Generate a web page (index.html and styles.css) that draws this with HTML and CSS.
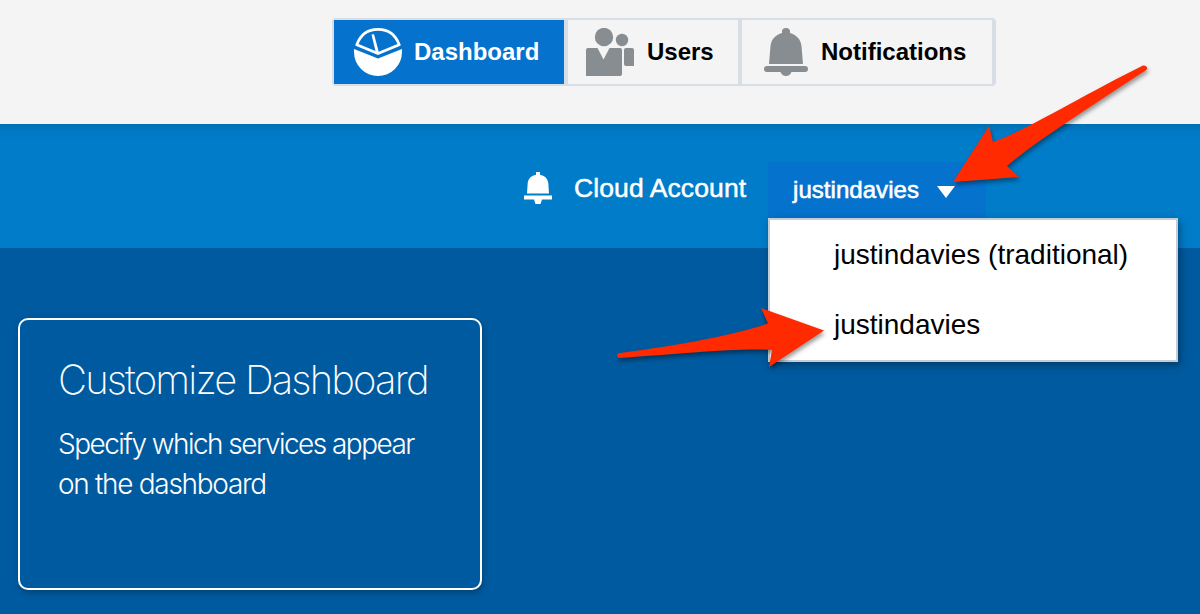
FILE: index.html
```html
<!DOCTYPE html>
<html lang="en">
<head>
<meta charset="utf-8">
<title>Dashboard</title>
<link rel="stylesheet" href="styles.css">
</head>
<body>
<header class="top">
  <nav class="tabs">
    <a class="tab active">
      <svg class="tab-icon" width="48" height="48" viewBox="0 0 48 48"><path d="M2.800 16.800C6.500 6.500 14.500 1.400 24 1.400S41.500 6.500 45.200 16.800L24 25.500Z" fill="none" stroke="#fff" stroke-width="2.800" stroke-linejoin="round"/><path d="M17.500 6.500l2.500-.3 5 18.500-3 .5Z" fill="#fff"/><path d="M0 21l24 9.500L48 21v3a24 24 0 0 1-48 0Z" fill="#fff"/></svg>
      <span class="label">Dashboard</span>
    </a>
    <a class="tab users">
      <svg class="tab-icon" width="48" height="48" viewBox="0 0 48 48" fill="#878d90"><circle cx="18" cy="9" r="9.200"/><circle cx="36" cy="12" r="6.200"/><path d="M2 20h9.500l6 11.500L23.500 20H34q2 0 2 2v24q0 2-2 2H0V22q0-2 2-2ZM40 20h6q2 0 2 2v16h-8q-2 0-2-2V22q0-2 2-2Z"/></svg>
      <span class="label">Users</span>
    </a>
    <a class="tab notifications">
      <svg class="tab-icon" width="44" height="48" viewBox="0 0 44 48" fill="#878d90"><path d="M5 36L6.500 18C7.500 10.500 12 7 18 5V3.500Q18 0 22 0T26 3.500V5C32 7 36.500 10.500 37.500 18L39 36ZM3 38h38a3 3 0 0 1 0 6H27.500Q26 48 22 48T16.500 44H3a3 3 0 0 1 0-6Z"/></svg>
      <span class="label">Notifications</span>
    </a>
  </nav>
</header>
<section class="bar">
  <svg class="bar-bell" width="28" height="32" viewBox="0 0 28 32" fill="#fff"><path d="M3 21.500L3.700 11C4.500 6 7.500 3.500 12 2.700V0h4v2.700C20.500 3.500 23.500 6 24.300 11L25 21.500ZM0 23.500h28v4H18l-1.500 4.500h-5L10 27.500H0Z"/></svg>
  <span class="bar-title">Cloud Account</span>
  <div class="account">
    <span class="account-name">justindavies</span>
    <svg width="18" height="12" viewBox="0 0 18 12"><path d="M0 0h18L9 12Z" fill="#fff"/></svg>
    <ul class="menu">
      <li>justindavies (traditional)</li>
      <li>justindavies</li>
    </ul>
  </div>
</section>
<main class="content">
  <article class="card">
    <h1>Customize Dashboard</h1>
    <p>Specify which services appear<br><span class="line-two">on the dashboard</span></p>
  </article>
</main>
<svg class="arrows" width="1200" height="614" viewBox="0 0 1200 614" fill="#ff2a00">
  <path d="M953 182L989 126L993 142C1025 131 1085 94 1143 65.500Q1146 65 1147 67.500Q1148 69.500 1144 71.500C1090 107 1035 142 1007 166L1019 177Z"/>
  <path d="M824 330.500L769 367L772 350C735 348 680 354 620 358Q617 358 617 355.500Q617 353.500 620 353C680 345 735 335 768 323.500L761 308Z"/>
</svg>
</body>
</html>
```
FILE: styles.css
```css
* { box-sizing: border-box; }
body {
  margin: 0;
  height: 614px;
  overflow: hidden;
  background: #005a9f;
  font-family: "Liberation Sans", Arial, sans-serif;
}
.top {
  height: 124px;
  padding: 18px 0 0 332px;
  background: #f4f4f4;
}
.tabs {
  display: flex;
  width: 664px;
  height: 68px;
  border: 2px solid #d8dee5;
  border-right-width: 4px;
  border-radius: 4px;
}
.tab {
  display: flex;
  align-items: center;
  color: #000;
  font-size: 24px;
  font-weight: 700;
}
.tab + .tab { border-left: 4px solid #d8dee5; }
.active { width: 230px; padding-left: 20px; gap: 12px; background: #0572ce; color: #fff; }
.users { width: 174px; padding-left: 18px; gap: 13px; }
.notifications { flex: 1; padding-left: 22px; gap: 13px; }
.label { line-height: 28px; }
.bar {
  display: flex;
  height: 124px;
  padding-left: 524px;
  background: linear-gradient(#006fb2, #007ac7 9px, #007cc9 20px);
  color: #fff;
}
.bar-bell { margin: 48px 22px 0 0; }
.bar-title {
  width: 194px;
  margin-top: 49px;
  font-size: 26.5px;
  line-height: 30px;
  letter-spacing: .1px;
  white-space: nowrap;
  -webkit-text-stroke: .5px #fff;
}
.account {
  position: relative;
  display: flex;
  align-items: center;
  gap: 18px;
  width: 218px;
  height: 56px;
  margin-top: 38px;
  padding-left: 25px;
  background: #0572ce;
}
.account-name {
  font-size: 24px;
  line-height: 28px;
  letter-spacing: .05px;
  -webkit-text-stroke: .6px #fff;
}
.account svg { margin-top: 3px; }
.menu {
  position: absolute;
  z-index: 1;
  top: 56px;
  left: 0;
  width: 410px;
  height: 144px;
  margin: 0;
  padding: 0 0 0 64px;
  list-style: none;
  background: #fff;
  border: 2px solid #c4cdd5;
  box-shadow: 2px 3px 8px rgba(0, 0, 0, .35);
  color: #000;
  font-size: 28px;
}
.menu li { line-height: 70px; white-space: nowrap; }
.content { padding: 70px 18px 0; }
.card {
  width: 464px;
  height: 272px;
  padding: 37px 38px 0;
  border: 2px solid #fff;
  border-radius: 10px;
  box-shadow: 1px 3px 6px rgba(0, 0, 0, .25);
  color: #fff;
  font-family: Inter, "Liberation Sans", sans-serif;
  white-space: nowrap;
}
.card h1 {
  margin: 0;
  font-size: 40px;
  font-weight: 250;
  line-height: 46px;
  letter-spacing: -1.85px;
}
.card p {
  margin: 21px 0 0;
  font-size: 28px;
  font-weight: 300;
  line-height: 40px;
  letter-spacing: -1.54px;
}
.line-two { letter-spacing: -1.3px; }
.arrows {
  position: absolute;
  z-index: 2;
  top: 0;
  left: 0;
  pointer-events: none;
  filter: drop-shadow(1px 3px 2px rgba(0, 0, 0, .4));
}
```
